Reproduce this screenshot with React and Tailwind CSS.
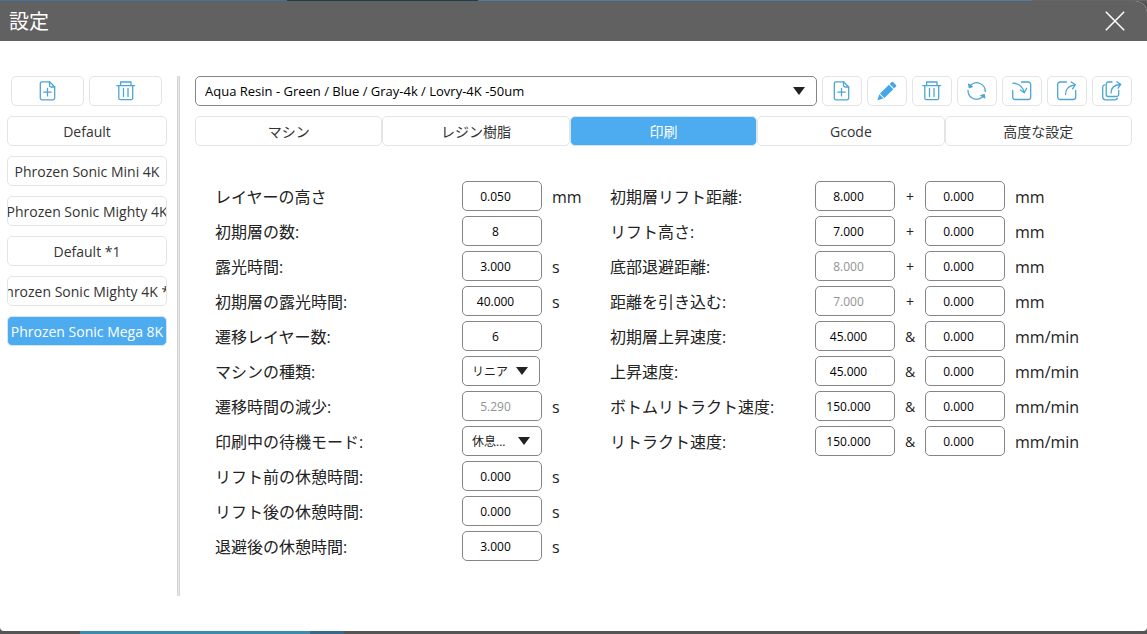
import React, { useState } from "react";
import clsx from "clsx";

const profiles = [
    "Default",
    "Phrozen Sonic Mini 4K",
    "Phrozen Sonic Mighty 4K",
    "Default *1",
    "Phrozen Sonic Mighty 4K *1",
    "Phrozen Sonic Mega 8K",
];

const tabs = ["マシン", "レジン樹脂", "印刷", "Gcode", "高度な設定"];

const baseSettings = [
    { id: "layerHeight", label: "レイヤーの高さ", value: "0.050", unit: "mm" },
    { id: "bottomCount", label: "初期層の数:", value: "8" },
    { id: "exposure", label: "露光時間:", value: "3.000", unit: "s" },
    { id: "bottomExposure", label: "初期層の露光時間:", value: "40.000", unit: "s" },
    { id: "transitionCount", label: "遷移レイヤー数:", value: "6" },
    { id: "machineType", label: "マシンの種類:", value: "リニア", select: true, narrow: true },
    { id: "transitionStep", label: "遷移時間の減少:", value: "5.290", unit: "s", disabled: true },
    { id: "waitMode", label: "印刷中の待機モード:", value: "休息...", select: true },
    { id: "restBeforeLift", label: "リフト前の休憩時間:", value: "0.000", unit: "s" },
    { id: "restAfterLift", label: "リフト後の休憩時間:", value: "0.000", unit: "s" },
    { id: "restAfterRetract", label: "退避後の休憩時間:", value: "3.000", unit: "s" },
];

const motionSettings = [
    { id: "bottomLift", label: "初期層リフト距離:", value: "8.000", sign: "+", unit: "mm" },
    { id: "lift", label: "リフト高さ:", value: "7.000", sign: "+", unit: "mm" },
    { id: "bottomRetract", label: "底部退避距離:", value: "8.000", sign: "+", unit: "mm", disabled: true },
    { id: "retract", label: "距離を引き込む:", value: "7.000", sign: "+", unit: "mm", disabled: true },
    { id: "bottomLiftSpeed", label: "初期層上昇速度:", value: "45.000", sign: "&", unit: "mm/min" },
    { id: "liftSpeed", label: "上昇速度:", value: "45.000", sign: "&", unit: "mm/min" },
    { id: "bottomRetractSpeed", label: "ボトムリトラクト速度:", value: "150.000", sign: "&", unit: "mm/min" },
    { id: "retractSpeed", label: "リトラクト速度:", value: "150.000", sign: "&", unit: "mm/min" },
];

function Icon({ children }) {
    return (
        <svg
            viewBox="0 0 20 20"
            className="w-5 h-5 flex-shrink-0"
            fill="none"
            stroke="#4ba6d3"
            strokeWidth="1.3"
            strokeLinecap="round"
            strokeLinejoin="round"
            aria-hidden="true"
        >
            {children}
        </svg>
    );
}

const FileAddIcon = () => (
    <Icon>
        <path d="M11.500 .8H4A1.700 1.700 0 0 0 2.300 2.500v14.600a1.700 1.700 0 0 0 1.700 1.700h11a1.700 1.700 0 0 0 1.700-1.700V6z" />
        <path d="M11.500 .8v3.500A1.700 1.700 0 0 0 13.200 6h3.500M9.500 7.500v7.400M5.800 11.200h7.400" />
    </Icon>
);

const TrashIcon = () => (
    <Icon>
        <path d="M.8 4.600h17.800M4.600 4.400V1h10.400v3.400M2.800 4.800v12.400a1.500 1.500 0 0 0 1.500 1.500h10.900a1.500 1.500 0 0 0 1.500-1.500V4.800" />
        <path d="M7.500 7.400v8M12 7.400v8" />
    </Icon>
);

const PencilIcon = () => (
    <Icon>
        <g fill="#45a6e8" stroke="none">
            <path d="M14.600 1.100a1 1 0 0 1 1.400 0l3 3a1 1 0 0 1 0 1.400l-2 1.900-4.400-4.300z" />
            <path d="M11.900 3.800l4.400 4.400-8.900 8.700-4.400-4.400z" />
            <path d="M2.300 13.300l4.300 4.300L.4 19.300z" />
        </g>
    </Icon>
);

const RefreshIcon = () => (
    <Icon>
        <path d="M3.600 4.200A8.600 8.600 0 0 1 18.200 10.600M15.600 15.800A8.600 8.600 0 0 1 1 9.400" />
        <path d="M1.600 3.200l.6 3.300 3.200-.8zM17.800 16.800l-.7-3.300-3.200 1z" fill="#4ba6d3" />
    </Icon>
);

const ImportIcon = () => (
    <Icon>
        <path d="M9.500 1h6.700A2.500 2.500 0 0 1 18.700 3.500v12.500a2.500 2.500 0 0 1-2.500 2.500h-13A2.500 2.500 0 0 1 .7 16V9.500" />
        <path d="M.8 2.200c6 .3 10 3.500 11.300 9.300M8.400 9l3.900 2.800 2.200-4.300" />
    </Icon>
);

const ExportIcon = () => (
    <Icon>
        <path d="M9.500 1H3.200A2.500 2.500 0 0 0 .7 3.500v12.500a2.500 2.500 0 0 0 2.500 2.500h13a2.500 2.500 0 0 0 2.500-2.500V9.500" />
        <path d="M8.500 13.500c0-5 3-9 9.500-9.700M14.200 1l4.100 2.700-2.700 4.200" />
    </Icon>
);

const ExportAllIcon = () => (
    <Icon>
        <path d="M10 1H6.200a2 2 0 0 0-2 2v10.500a2 2 0 0 0 2 2h8.500a2 2 0 0 0 2-2V9.500" />
        <path d="M2.600 3.800C1.300 4 .7 4.700.7 6v9.800a3 3 0 0 0 3 3H13c1.300 0 2-.6 2.300-1.600" />
        <path d="M9 12c0-4.500 3-8 9.300-8.500M14.800 .8l3.900 2.600-2.600 3.800" />
    </Icon>
);

const actions = [
    { name: "追加", icon: FileAddIcon },
    { name: "編集", icon: PencilIcon },
    { name: "削除", icon: TrashIcon },
    { name: "リセット", icon: RefreshIcon },
    { name: "インポート", icon: ImportIcon },
    { name: "エクスポート", icon: ExportIcon },
    { name: "すべてエクスポート", icon: ExportAllIcon },
];

function IconButton({ name, icon: IconShape, className }) {
    return (
        <button
            type="button"
            aria-label={name}
            className={clsx(
                "flex h-[30px] items-center justify-center rounded-[5px] border border-[#e4e4e4] bg-white hover:bg-sky-50",
                className
            )}
        >
            <IconShape />
        </button>
    );
}

function SelectBox({ id, value, label, className }) {
    return (
        <div className={clsx("relative", className)}>
            <select
                id={id}
                aria-label={label}
                defaultValue={value}
                className="block h-[30px] w-full appearance-none rounded-[5px] border border-[#858585] bg-white px-[9px] pt-px text-inherit"
            >
                <option>{value}</option>
            </select>
            <svg
                viewBox="0 0 12 8"
                className="pointer-events-none absolute right-3 top-[11px] h-2 w-3"
                aria-hidden="true"
            >
                <path d="M0 0h12L6 8z" fill="#222" />
            </svg>
        </div>
    );
}

function NumberBox({ id, value, disabled, label }) {
    return (
        <input
            id={id}
            type="text"
            aria-label={label}
            defaultValue={value}
            disabled={disabled}
            className="h-[30px] w-20 rounded-[5px] border border-[#858585] bg-white pr-[13px] text-center text-xs text-black disabled:text-[#929292]"
        />
    );
}

export default function App() {
    const [profile, setProfile] = useState("Phrozen Sonic Mega 8K");
    const [tab, setTab] = useState("印刷");

    return (
        <div className="flex min-h-screen flex-col bg-[#555] font-['Open_Sans','Noto_Sans_CJK_JP',sans-serif] text-[#222]">
            {/* Strip of the window behind the dialog */}
            <div className="flex h-px">
                <div className="w-1/4 bg-[#3f7492]" />
                <div className="w-1/6 bg-[#1f3d50]" />
                <div className="flex-1 bg-[#4c7f9c]" />
                <div className="w-1/10 bg-[#666]" />
            </div>

            {/* Dialog */}
            <div className="flex flex-1 flex-col overflow-hidden rounded-b rounded-tr-xl bg-white">
                <header className="flex h-10 flex-shrink-0 items-center justify-between bg-[#616161] pl-[9px] pr-[22px] text-white">
                    <h1 className="pt-0.5 text-xl">設定</h1>
                    <button type="button" aria-label="閉じる">
                        <svg viewBox="0 0 20 20" className="w-5 h-5" stroke="currentColor" strokeWidth="1.5">
                            <path d="M.8 .8l18.400 18.400M19.200 .8L.8 19.200" />
                        </svg>
                    </button>
                </header>

                <div className="flex flex-1 pb-[35px] pt-[35px]">
                    {/* Machine profiles */}
                    <aside className="flex w-[174px] flex-shrink-0 flex-col gap-[10px] px-[7px]">
                        <div className="flex w-40 gap-[5px] pl-1 pr-[5px]">
                            <IconButton name="追加" icon={FileAddIcon} className="flex-1" />
                            <IconButton name="削除" icon={TrashIcon} className="flex-1" />
                        </div>
                        {profiles.map((name) => (
                            <button
                                key={name}
                                type="button"
                                onClick={() => setProfile(name)}
                                className={clsx(
                                    "flex h-[30px] w-40 items-center justify-center overflow-hidden whitespace-nowrap rounded-[5px] border pt-0.5 text-sm",
                                    name === profile
                                        ? "border-[#d5e6f3] bg-[#4dabef] text-white"
                                        : "border-[#e4e4e4] bg-white text-[#333]"
                                )}
                            >
                                <span>{name}</span>
                            </button>
                        ))}
                    </aside>

                    <div className="ml-[3px] w-[3px] flex-shrink-0 border-x border-[#d4d4d4] bg-[#e8e8e8]" />

                    <main className="min-w-0 flex-1 px-[15px]">
                        <div className="flex gap-[5px]">
                            <SelectBox
                                id="resin"
                                label="レジン"
                                value="Aqua Resin - Green / Blue / Gray-4k / Lovry-4K -50um"
                                className="flex-1 text-[13px] text-black"
                            />
                            {actions.map((action) => (
                                <IconButton key={action.name} {...action} className="w-10" />
                            ))}
                        </div>

                        <div className="mt-[10px] flex" role="tablist">
                            {tabs.map((name) => (
                                <button
                                    key={name}
                                    type="button"
                                    role="tab"
                                    aria-selected={name === tab}
                                    onClick={() => setTab(name)}
                                    className={clsx(
                                        "h-[30px] flex-1 rounded-[5px] border pt-0.5 text-sm",
                                        name === tab
                                            ? "border-[#d5e6f3] bg-[#4dabef] text-white"
                                            : "border-[#e4e4e4] bg-white text-[#333]"
                                    )}
                                >
                                    {name}
                                </button>
                            ))}
                        </div>

                        {/* Print parameters */}
                        <div className="mt-[35px] flex pl-5">
                            <div className="flex w-[395px] flex-col gap-[5px]">
                                {baseSettings.map((item) => (
                                    <div key={item.id} className="flex h-[30px] items-center">
                                        <label htmlFor={item.id} className="w-[247px] pt-0.5">
                                            {item.label}
                                        </label>
                                        {item.select ? (
                                            <SelectBox
                                                id={item.id}
                                                value={item.value}
                                                className={clsx("text-xs", item.narrow ? "w-[78px]" : "w-20")}
                                            />
                                        ) : (
                                            <NumberBox id={item.id} value={item.value} disabled={item.disabled} />
                                        )}
                                        {item.unit && <span className="ml-[10px] pt-0.5">{item.unit}</span>}
                                    </div>
                                ))}
                            </div>

                            <div className="flex flex-col gap-[5px]">
                                {motionSettings.map((item) => (
                                    <div key={item.id} className="flex h-[30px] items-center">
                                        <label htmlFor={item.id} className="w-[205px] pt-0.5">
                                            {item.label}
                                        </label>
                                        <NumberBox id={item.id} value={item.value} disabled={item.disabled} />
                                        <span className="w-[30px] pt-0.5 text-center text-sm">{item.sign}</span>
                                        <NumberBox id={`${item.id}2`} value="0.000" label={`${item.label} 2`} />
                                        <span className="ml-[10px] pt-0.5">{item.unit}</span>
                                    </div>
                                ))}
                            </div>
                        </div>
                    </main>
                </div>
            </div>

            <div className="flex h-[3px]">
                <div className="w-[7%]" />
                <div className="w-[20%] bg-[#3d89b0]" />
                <div className="w-[3%] bg-[#356a8c]" />
            </div>
        </div>
    );
}
